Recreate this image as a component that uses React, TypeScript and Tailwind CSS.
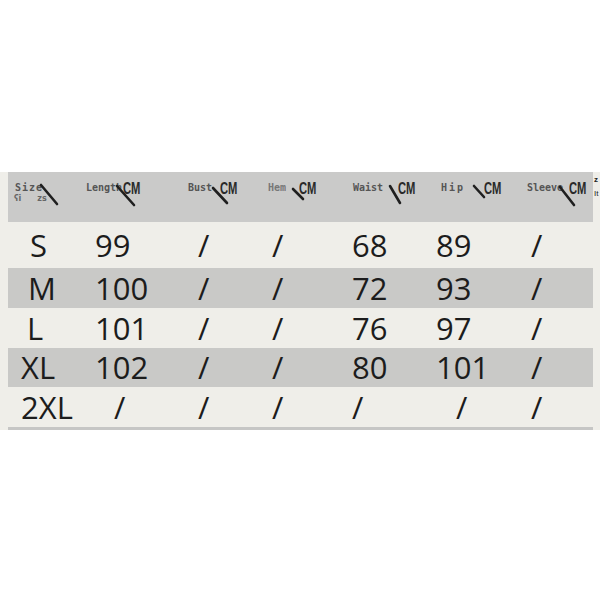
import React from 'react';

const colW = ['w-[77px]', 'w-[95px]', 'w-[75px]', 'w-[85px]', 'w-[85px]', 'w-[85px]', 'w-[83px]'];

// header cells: label box width is where "CM" starts inside the cell
const headers = [
  { label: 'Size', box: 'w-[56px] pl-[7px] tracking-[1px]', cm: false, line: [33, 13, 49, 32] },
  { label: 'Length', box: 'w-[38px] pl-[1px] text-[9.5px]', cm: true, line: [32, 14, 49, 33] },
  { label: 'Bust', box: 'w-[40px] pl-[8px]', cm: true, line: [33, 16, 47, 31] },
  { label: 'Hem', box: 'w-[44px] pl-[13px] text-[8px] text-[#777]', cm: true, line: [38, 17, 48, 27] },
  { label: 'Waist', box: 'w-[58px] pl-[13px]', cm: true, line: [50, 14, 60, 31] },
  { label: 'Hip', box: 'w-[59px] pl-[16px] tracking-[2px]', cm: true, line: [49, 14, 59, 25] },
  { label: 'Sleeve', box: 'w-[59px] pl-[17px]', cm: true, line: [50, 15, 64, 33] },
];

const rows = [
  { h: 'h-[46px]', bg: '', cells: [['S', 'pl-[22px]'], ['99', 'pl-[10px]'], ['/', 'pl-[18px]'], ['/', 'pl-[17px]'], ['68', 'pl-[12px]'], ['89', 'pl-[11px]'], ['/', 'pl-[21px]']] },
  { h: 'h-[40px]', bg: 'bg-[#c9c9c7]', cells: [['M', 'pl-[20px]'], ['100', 'pl-[10px]'], ['/', 'pl-[18px]'], ['/', 'pl-[17px]'], ['72', 'pl-[12px]'], ['93', 'pl-[11px]'], ['/', 'pl-[21px]']] },
  { h: 'h-[40px]', bg: '', cells: [['L', 'pl-[19px]'], ['101', 'pl-[10px]'], ['/', 'pl-[18px]'], ['/', 'pl-[17px]'], ['76', 'pl-[12px]'], ['97', 'pl-[11px]'], ['/', 'pl-[21px]']] },
  { h: 'h-[39px]', bg: 'bg-[#c9c9c7]', cells: [['XL', 'pl-[13px]'], ['102', 'pl-[10px]'], ['/', 'pl-[18px]'], ['/', 'pl-[17px]'], ['80', 'pl-[12px]'], ['101', 'pl-[11px]'], ['/', 'pl-[21px]']] },
  { h: 'h-[40px]', bg: '', cells: [['2XL', 'pl-[13px]'], ['/', 'pl-[29px]'], ['/', 'pl-[18px]'], ['/', 'pl-[17px]'], ['/', 'pl-[12px]'], ['/', 'pl-[31px]'], ['/', 'pl-[21px]']] },
];

function HeaderCell({ h, i }: { h: (typeof headers)[number]; i: number }) {
  const [x1, y1, x2, y2] = h.line;
  return (
    <div className={`${colW[i]} relative h-full flex items-start pt-[10px]`}>
      <span
        className={`${h.box} shrink-0 text-[10px] leading-[12px] font-bold text-[#555] font-['DejaVu_Sans_Mono',monospace]`}
      >
        {h.label}
      </span>
      {h.cm && (
        <span className="inline-block origin-left scale-x-70 text-[16px] leading-[14px] font-bold text-[#2a2a2a] font-['Liberation_Sans',Arial,sans-serif]">
          CM
        </span>
      )}
      {i === 0 && (
        <div className="absolute left-[6px] top-[23px] flex gap-[16px] text-[8px] leading-none font-bold text-[#666] font-['DejaVu_Sans',sans-serif]">
          <span>ʕi</span>
          <span>zs</span>
        </div>
      )}
      <svg className="absolute left-0 top-0 overflow-visible pointer-events-none" width="70" height="50" viewBox="0 0 70 50">
        <line x1={x1} y1={y1} x2={x2} y2={y2} stroke="#1f1f1f" strokeWidth={2.6} strokeLinecap="round" />
      </svg>
    </div>
  );
}

export default function App() {
  return (
    <div className="w-[600px] h-[600px] bg-white pt-[172px] font-['Open_Sans','Noto_Sans',sans-serif]">
      <div className="flex bg-[#efeee9]">
        <div className="w-[8px]" />
        <div className="w-[585px]">
          {/* header band */}
          <div className="flex h-[50px] bg-[#cacac9]">
            {headers.map((h, i) => (
              <HeaderCell key={h.label} h={h} i={i} />
            ))}
          </div>

          {rows.map((r, ri) => (
            <div key={ri} className={`flex items-center ${r.h} ${r.bg}`}>
              {r.cells.map(([txt, pad], ci) => (
                <div key={ci} className={`${colW[ci]} ${pad} text-[31px] leading-none text-[#1c1c1c]`}>
                  {txt}
                </div>
              ))}
            </div>
          ))}
          <div className="h-[3px] bg-[#c6c6c5]" />
        </div>
        <div className="w-[7px] pl-[1px] pt-[1px] text-[8px] leading-[14px] font-bold text-[#222] font-['Liberation_Sans',sans-serif]">
          <div>z</div>
          <div className="font-normal">It</div>
        </div>
      </div>
    </div>
  );
}
